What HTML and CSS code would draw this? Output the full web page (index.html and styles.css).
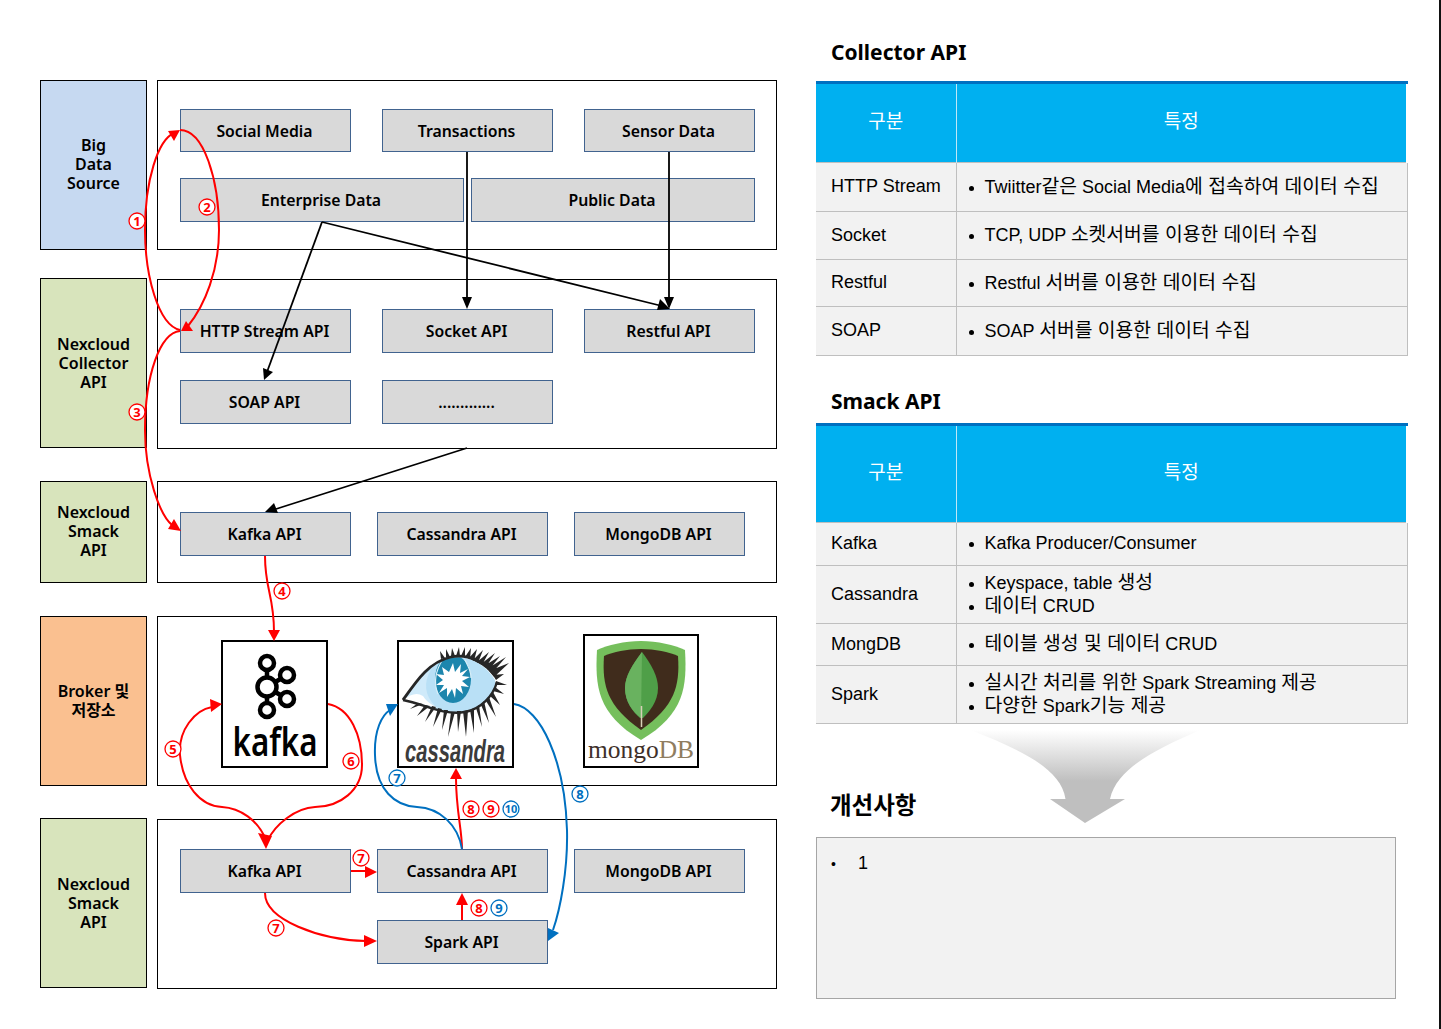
FILE: index.html
```html
<!DOCTYPE html>
<html lang="ko">
<head>
<meta charset="utf-8">
<title>Nexcloud API</title>
<link rel="stylesheet" href="styles.css">
</head>
<body>
<main class="page">
  <section class="diagram">
    <div class="tier tier-first">
      <div class="label blue">Big<br>Data<br>Source</div>
      <div class="panel panel-source">
        <div class="row gap31 short-row"><div class="box">Social Media</div><div class="box">Transactions</div><div class="box">Sensor Data</div></div>
        <div class="row gap7"><div class="box wide">Enterprise Data</div><div class="box wide">Public Data</div></div>
      </div>
    </div>
    <div class="tier tier-collector">
      <div class="label green">Nexcloud<br>Collector<br>API</div>
      <div class="panel panel-collector">
        <div class="row gap31"><div class="box">HTTP Stream API</div><div class="box">Socket API</div><div class="box">Restful API</div></div>
        <div class="row gap31"><div class="box">SOAP API</div><div class="box">.............</div></div>
      </div>
    </div>
    <div class="tier tier-smack">
      <div class="label green">Nexcloud<br>Smack<br>API</div>
      <div class="panel panel-smack">
        <div class="row gap26"><div class="box">Kafka API</div><div class="box">Cassandra API</div><div class="box">MongoDB API</div></div>
      </div>
    </div>
    <div class="tier tier-broker">
      <div class="label orange">Broker 및<br>저장소</div>
      <div class="panel panel-broker">
        <div class="logo logo-kafka">
          <svg viewBox="0 0 103 124" class="logo-svg" aria-label="kafka">
            <g fill="none" stroke="#000" stroke-width="4.5">
              <path d="M44 21 V68 M44 45 L64 33 M44 45 L64 57"/>
              <circle cx="44" cy="21" r="7" fill="#fff"/>
              <circle cx="44" cy="45" r="9.500" fill="#fff"/>
              <circle cx="44" cy="68" r="7" fill="#fff"/>
              <circle cx="64" cy="33" r="7" fill="#fff"/>
              <circle cx="64" cy="57" r="7" fill="#fff"/>
            </g>
            <text x="52" y="114" class="kafka-word" text-anchor="middle" textLength="85" lengthAdjust="spacingAndGlyphs">kafka</text>
          </svg>
        </div>
        <div class="logo logo-cassandra">
          <svg viewBox="0 0 113 124" class="logo-svg" aria-label="cassandra">
            <defs><clipPath id="eyeclip"><path d="M4 58 C18 38 30 20 52 16 C70 12 88 24 96 38 C98 52 82 68 62 70 C44 72 26 62 4 58Z"/></clipPath></defs>
            <path d="M4 58 C18 38 30 20 52 16 C70 12 88 24 96 38 C98 52 82 68 62 70 C44 72 26 62 4 58Z" fill="#b9e0f6"/>
            <path d="M32 28 C24 40 26 54 36 64 C28 63 16 60 4 58 C14 44 22 34 32 28Z" fill="#cfeafa"/>
            <path d="M4 58 C12 52 18 50 24 54 C28 60 34 64 40 66 C28 64 16 60 4 58Z" fill="#fff"/>
            <g clip-path="url(#eyeclip)">
              <ellipse cx="54" cy="37" rx="18" ry="24" fill="#1d86ad"/>
              <path d="M54 21 L56 30 L62 22 L61 31 L69 27 L63 34 L71 35 L63 39 L70 45 L62 44 L64 52 L57 46 L56 56 L53 47 L48 55 L48 46 L40 51 L45 43 L37 43 L44 38 L37 32 L45 33 L43 25 L50 30 Z" fill="#fff"/>
              <path d="M44 17 C37 28 34 40 39 52 M66 18 C70 26 72 30 72 36" fill="none" stroke="#d8eef8" stroke-width="1.200"/>
            </g>
            <path d="M4 58 C18 38 30 20 52 15 C70 11 88 22 98 36" fill="none" stroke="#262626" stroke-width="2.800"/>
            <path d="M4 58 C26 62 44 74 66 70 C82 67 94 54 98 40" fill="none" stroke="#262626" stroke-width="2.400"/>
            <path fill="#262626" d="M42 17 L41 9 L46 16Z M47 15 L47 7 L51 15Z M52 14 L53 6 L56 14Z M57 14 L60 5 L61 14Z M62 14 L66 5 L66 15Z M66 15 L72 6 L71 17Z M70 16 L78 7 L75 19Z M74 18 L84 8 L79 21Z M78 20 L90 10 L83 23Z M82 22 L96 11 L87 25Z M85 24 L101 14 L90 28Z M88 27 L107 15 L93 31Z M90 29 L110 21 L95 35Z M94 33 L105 32 L97 38Z M97 39 L108 43 L96 43Z M96 45 L105 52 L94 49Z M94 50 L101 63 L91 54Z M90 55 L97 75 L87 59Z M85 59 L90 81 L82 63Z M80 63 L83 85 L77 66Z M75 66 L75 91 L71 68Z M69 68 L67 95 L64 69Z M62 69 L59 90 L58 69Z M56 70 L49 95 L52 70Z M49 68 L43 88 L45 68Z M43 67 L34 85 L39 66Z M37 65 L26 80 L33 64Z M31 64 L18 74 L26 63Z M24 62 L11 67 L19 61Z"/>
            <text x="56" y="120" class="cassandra-word" text-anchor="middle" textLength="100" lengthAdjust="spacingAndGlyphs">cassandra</text>
          </svg>
        </div>
        <div class="logo logo-mongo">
          <svg viewBox="0 0 112 130" class="logo-svg" aria-label="mongoDB">
            <path d="M56 5 C72 5 90 9 100 14 C102 50 100 78 56 104 C12 78 10 50 12 14 C22 9 40 5 56 5Z" fill="#75bf5c"/>
            <path d="M56 13 C70 13 84 16 93 20 C95 50 90 70 56 94 C22 70 17 50 19 20 C28 16 42 13 56 13Z" fill="#402c1c"/>
            <path d="M57 16 C66 28 73 40 73 52 C73 66 64 76 58 82 L55 82 C48 76 40 66 40 52 C40 40 48 28 57 16Z" fill="#4f9f48"/>
            <path d="M57 16 C48 28 40 40 40 52 C40 66 48 76 56 82 Z" fill="#69b25f"/>
            <path d="M56.500 70 V91" stroke="#d8d0b8" stroke-width="1.500"/>
            <text x="3" y="122" class="mongo-word" textLength="106" lengthAdjust="spacingAndGlyphs">mongo<tspan class="mongo-db">DB</tspan></text>
          </svg>
        </div>
      </div>
    </div>
    <div class="tier tier-last">
      <div class="label green">Nexcloud<br>Smack<br>API</div>
      <div class="panel panel-last">
        <div class="row gap26"><div class="box">Kafka API</div><div class="box">Cassandra API</div><div class="box">MongoDB API</div></div>
        <div class="row spark-row"><div class="box">Spark API</div></div>
      </div>
    </div>

    <svg class="overlay" viewBox="0 0 777 1029">
      <g class="line-black">
        <path d="M322 222 L267 372"/><path d="M322 222 L662 306"/><path d="M467 152 V300"/><path d="M669 152 V300"/><path d="M467 448 L276 509"/>
      </g>
      <g class="head-black">
        <polygon points="264,380 263,368 273,372"/>
        <polygon points="670,309 660,299 657,310"/>
        <polygon points="467,309 462,297 472,297"/>
        <polygon points="669,309 664,297 674,297"/>
        <polygon points="265,512 274,503 278,513"/>
      </g>
      <g class="line-red">
        <path d="M180 330 C158 325 145 275 145 230 C145 180 158 140 174 133"/>
        <path d="M180 130 C204 130 219 180 219 230 C219 270 205 305 188 326"/>
        <path d="M180 331 C160 333 145 375 145 430 C145 475 160 515 172 525"/>
        <path d="M265 556 C265 590 274 595 274 632"/>
        <path d="M266 840 C258 820 240 808 222 807 C200 806 183 785 180 755 C178 730 195 710 212 707"/>
        <path d="M328 704 C350 708 362 735 362 765 C362 790 340 807 315 807 C295 808 275 825 268 840"/>
        <path d="M351 871 H368"/>
        <path d="M265 893 C265 920 320 940 366 941"/>
        <path d="M462 920 V902"/>
        <path d="M462 849 C462 830 456 810 456 778"/>
      </g>
      <g class="head-red">
        <polygon points="180,130 168,131 174,141"/>
        <polygon points="181,331 186,321 193,331"/>
        <polygon points="181,531 168,529 174,519"/>
        <polygon points="274,641 268,630 280,630"/>
        <polygon points="222,704 210,699 211,712"/>
        <polygon points="266,849 258,833 272,836"/>
        <polygon points="377,872 365,866 365,878"/>
        <polygon points="377,941 364,935 364,947"/>
        <polygon points="462,893 456,905 468,905"/>
        <polygon points="456,768 450,779 462,779"/>
      </g>
      <g class="line-blue">
        <path d="M462 849 C458 825 440 808 417 807 C395 806 376 790 375 755 C374 730 382 715 390 710"/>
        <path d="M514 704 C540 708 565 760 567 830 C568 870 560 910 553 930"/>
      </g>
      <g class="head-blue">
        <polygon points="398,704 386,704 390,716"/>
        <polygon points="548,941 548,928 559,933"/>
      </g>
      <g class="badge red-badge">
        <circle cx="137" cy="221" r="8"/><text x="137" y="225.500">1</text>
        <circle cx="207" cy="207" r="8"/><text x="207" y="211.500">2</text>
        <circle cx="137" cy="412" r="8"/><text x="137" y="416.500">3</text>
        <circle cx="282" cy="591" r="8"/><text x="282" y="595.500">4</text>
        <circle cx="173" cy="749" r="8"/><text x="173" y="753.500">5</text>
        <circle cx="351" cy="761" r="8"/><text x="351" y="765.500">6</text>
        <circle cx="471" cy="809" r="8"/><text x="471" y="813.500">8</text>
        <circle cx="491" cy="809" r="8"/><text x="491" y="813.500">9</text>
        <circle cx="361" cy="858" r="8"/><text x="361" y="862.500">7</text>
        <circle cx="479" cy="908" r="8"/><text x="479" y="912.500">8</text>
        <circle cx="276" cy="928" r="8"/><text x="276" y="932.500">7</text>
      </g>
      <g class="badge blue-badge">
        <circle cx="397" cy="778" r="8"/><text x="397" y="782.500">7</text>
        <circle cx="580" cy="794" r="8"/><text x="580" y="798.500">8</text>
        <circle cx="511" cy="809" r="8"/><text class="small-digit" x="511" y="813">10</text>
        <circle cx="499" cy="908" r="8"/><text x="499" y="912.500">9</text>
      </g>
    </svg>
  </section>

  <section class="side">
    <h2 class="title title-collector">Collector API</h2>
    <table class="spec spec-collector">
      <thead><tr><th class="col-a">구분</th><th>특정</th></tr></thead>
      <tbody>
        <tr><td class="col-a">HTTP Stream</td><td><ul><li>Twiitter<span class="ko">같은</span> Social Media<span class="ko">에 접속하여 데이터 수집</span></li></ul></td></tr>
        <tr><td class="col-a">Socket</td><td><ul><li>TCP, UDP <span class="ko">소켓서버를 이용한 데이터 수집</span></li></ul></td></tr>
        <tr><td class="col-a">Restful</td><td><ul><li>Restful <span class="ko">서버를 이용한 데이터 수집</span></li></ul></td></tr>
        <tr><td class="col-a">SOAP</td><td><ul><li>SOAP <span class="ko">서버를 이용한 데이터 수집</span></li></ul></td></tr>
      </tbody>
    </table>
    <h2 class="title title-smack">Smack API</h2>
    <table class="spec spec-smack">
      <thead><tr><th class="col-a">구분</th><th>특정</th></tr></thead>
      <tbody>
        <tr><td class="col-a">Kafka</td><td><ul><li>Kafka Producer/Consumer</li></ul></td></tr>
        <tr><td class="col-a">Cassandra</td><td><ul><li>Keyspace, table <span class="ko">생성</span></li><li><span class="ko">데이터</span> CRUD</li></ul></td></tr>
        <tr><td class="col-a">MongDB</td><td><ul><li><span class="ko">테이블 생성 및 데이터</span> CRUD</li></ul></td></tr>
        <tr><td class="col-a">Spark</td><td><ul><li><span class="ko">실시간 처리를 위한</span> Spark Streaming <span class="ko">제공</span></li><li><span class="ko">다양한</span> Spark<span class="ko">기능 제공</span></li></ul></td></tr>
      </tbody>
    </table>
    <svg class="down-arrow" viewBox="0 0 240 96" aria-hidden="true">
      <defs><linearGradient id="fade" x1="0" y1="0" x2="0" y2="1"><stop offset="0" stop-color="#fff"/><stop offset=".55" stop-color="#bfbfbf"/><stop offset="1" stop-color="#bfbfbf"/></linearGradient></defs>
      <path d="M6 2 H235 C190 22 152 40 145 71 H160 L120 95 L85 71 H100.500 C96 40 55 22 6 2Z" fill="url(#fade)"/>
    </svg>
    <h2 class="title title-improve">개선사항</h2>
    <div class="note"><ul><li>1</li></ul></div>
  </section>
</main>
</body>
</html>
```
FILE: styles.css
```css
* { box-sizing: border-box; }
html, body { margin: 0; padding: 0; background: #fff; }
body { width: 1441px; height: 1029px; overflow: hidden; font-family: "Noto Sans", "Noto Sans CJK KR", sans-serif; color: #000; }
.page { display: flex; height: 1029px; border-right: 2px solid #111; }

/* Left diagram */
.diagram { position: relative; width: 737px; margin-left: 40px; flex: none; padding-top: 80px; margin-right: 39px; }
.tier { display: flex; gap: 10px; align-items: flex-start; }
.tier-collector { margin-top: 28px; }
.tier-smack { margin-top: 32px; }
.tier-broker { margin-top: 33px; }
.tier-last { margin-top: 32px; }
.label { width: 107px; flex: none; border: 1px solid #000; display: flex; align-items: center; justify-content: center; text-align: center; font-weight: 600; font-size: 16px; line-height: 19px; height: 170px; }
.tier-first .label { padding-bottom: 2px; }
.tier-smack .label { height: 102px; padding-bottom: 2px; }
.blue { background: #c6d9f1; }
.green { background: #d8e4bc; }
.orange { background: #fac090; }
.panel { width: 620px; height: 170px; border: 1px solid #000; background: #fff; padding: 28px 0 0 22px; display: flex; flex-direction: column; }
.tier-collector .panel { margin-top: 1px; padding-top: 29px; }
.tier-last .panel { margin-top: 1px; padding-top: 29px; }
.panel-smack { height: 102px; padding-top: 30px; }
.row { display: flex; }
.row + .row { margin-top: 26px; }
.panel-collector .row + .row { margin-top: 27px; }
.gap31 { gap: 31px; }
.gap7 { gap: 7px; }
.gap26 { gap: 26px; }
.spark-row { margin-left: 197px; }
.panel-last .row + .row { margin-top: 27px; }
.box { width: 171px; height: 44px; background: #d9d9d9; border: 1px solid #41638f; display: flex; align-items: center; justify-content: center; font-weight: 600; font-size: 15.800px; white-space: nowrap; padding-right: 2px; }
.short-row .box { height: 43px; }
.wide { width: 284px; }

.panel-broker { flex-direction: row; align-items: flex-end; padding: 0 0 17px 63px; }
.logo { border: 2px solid #000; background: #fff; flex: none; }
.logo-svg { display: block; width: 100%; height: 100%; overflow: visible; }
.logo-kafka { width: 107px; height: 128px; margin-right: 69px; }
.logo-cassandra { width: 117px; height: 128px; margin-right: 69px; }
.logo-mongo { width: 116px; height: 134px; }
.kafka-word { font-family: "Noto Sans", sans-serif; font-weight: 600; font-size: 40px; fill: #000; }
.cassandra-word { font-family: "Liberation Sans Narrow", "Liberation Sans", sans-serif; font-style: italic; font-weight: 700; font-size: 31px; fill: #3b3b3b; }
.mongo-word { font-family: "Liberation Serif", serif; font-size: 25px; fill: #40302a; }
.mongo-db { fill: #8f7d60; }

.overlay { position: absolute; left: -40px; top: 0; width: 777px; height: 1029px; pointer-events: none; overflow: visible; }
.line-black path { fill: none; stroke: #000; stroke-width: 1.800; }
.head-black polygon { fill: #000; }
.line-red path { fill: none; stroke: #f00; stroke-width: 2; }
.head-red polygon { fill: #f00; }
.line-blue path { fill: none; stroke: #0070c0; stroke-width: 2; }
.head-blue polygon { fill: #0070c0; }
.badge circle { fill: #fff; stroke-width: 1.300; }
.badge text { font-family: "Noto Sans", sans-serif; font-size: 13px; font-weight: 700; text-anchor: middle; }
.badge .small-digit { font-size: 11px; }
.red-badge circle { stroke: #f00; }
.red-badge text { fill: #f00; }
.blue-badge circle { stroke: #0070c0; }
.blue-badge text { fill: #0070c0; }

/* Right side */
.side { position: relative; width: 592px; flex: none; }
.title { margin: 0; font-size: 21px; font-weight: 700; line-height: 28px; padding-left: 15px; font-family: "Noto Sans", "Noto Sans CJK KR", sans-serif; }
.title-collector { margin-top: 38px; }
.title-smack { margin-top: 31px; }
.title-improve { margin-top: 66px; padding-left: 14px; font-size: 23.500px; font-family: "Noto Sans CJK KR", sans-serif; }
.spec { width: 592px; margin-top: 15px; border-collapse: collapse; table-layout: fixed; font-family: "Liberation Sans", "Noto Sans CJK KR", sans-serif; font-size: 18px; border-top: 3px solid #0070c0; }
.spec-smack { margin-top: 8px; }
.spec th { background: #00b0f0; color: #fff; font-weight: 400; font-size: 19px; font-family: "Noto Sans CJK KR", sans-serif; padding: 0 0 8px; border-left: 1px solid #bfe7f7; border-right: 2px solid #fff; }
.spec th:first-child { border-left: 0; border-right: 0; }
.spec td { background: #f2f2f2; padding: 0 0 2px 14px; border: 1px solid #bfbfbf; line-height: 22px; }
.spec td:first-child { border-left: 0; padding-left: 15px; }
.ko { font-family: "Noto Sans CJK KR", sans-serif; font-size: 19.300px; line-height: 20px; }
.col-a { width: 140px; }
.spec-collector thead tr { height: 80px; }
.spec-collector tbody tr:nth-child(1) { height: 49px; }
.spec-collector tbody tr:nth-child(2) { height: 48px; }
.spec-collector tbody tr:nth-child(3) { height: 47px; }
.spec-collector tbody tr:nth-child(4) { height: 49px; }
.spec-smack thead tr { height: 98px; }
.spec-smack tbody tr:nth-child(1) { height: 43px; }
.spec-smack tbody tr:nth-child(2) { height: 58px; }
.spec-smack tbody tr:nth-child(3) { height: 42px; }
.spec-smack tbody tr:nth-child(4) { height: 58px; }
.spec ul { margin: 0; padding: 0 0 0 14px; list-style: disc; }
.spec li::marker { font-size: 15px; }
.down-arrow { position: absolute; left: 149px; top: 728px; width: 240px; height: 96px; }
.note { width: 580px; height: 162px; margin-top: 19px; border: 1px solid #a6a6a6; background: #f2f2f2; padding: 12px 14px; font-family: "Liberation Sans", sans-serif; font-size: 18px; line-height: 26px; }
.note ul { margin: 0; padding: 0; list-style: none; }
.note li::before { content: "•"; display: inline-block; width: 27px; font-size: 14px; }
```
